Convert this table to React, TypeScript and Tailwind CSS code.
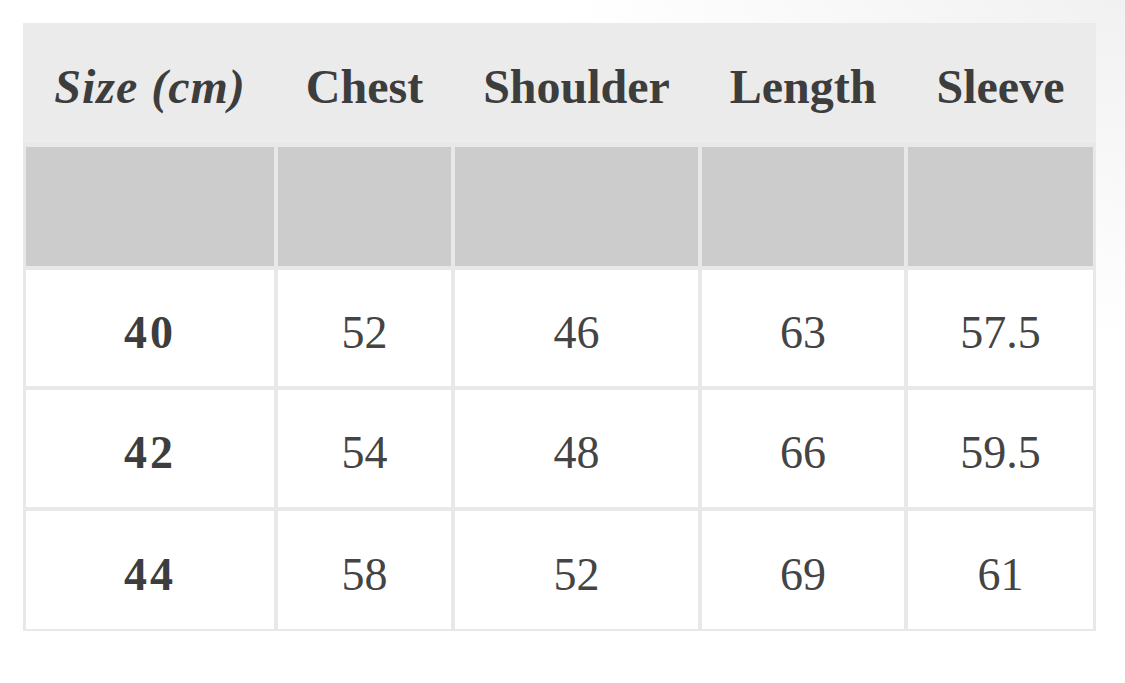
import React from 'react';

const headers = ['Size (cm)', 'Chest', 'Shoulder', 'Length', 'Sleeve'];

const rows = [
  ['40', '52', '46', '63', '57.5'],
  ['42', '54', '48', '66', '59.5'],
  ['44', '58', '52', '69', '61'],
];

const cols = 'grid grid-cols-[248px_173px_243px_202px_185px] gap-x-[4px]';

const App: React.FC = () => {
  return (
    <div className="w-[1125px] h-[683px] bg-[radial-gradient(ellipse_at_top_right,#f1f1f1_0%,#ffffff_35%)] pt-[23px] pl-[23px] font-['Liberation_Serif',serif] text-[#3d3d3d]">
      <div className="w-[1073px]">
        {/* header */}
        <div className={`${cols} h-[120px] bg-[#ebebeb] px-[3px] pt-[8px] items-center`}>
          {headers.map((h, i) => (
            <div
              key={h}
              className={`text-center text-[48px] font-bold leading-none ${i === 0 ? 'italic tracking-[1px]' : ''}`}
            >
              {h}
            </div>
          ))}
        </div>

        {/* body */}
        <div className={`${cols} gap-y-[4px] bg-[#e8e8e8] p-[3px] pt-[4px] pb-[2px]`}>
          {headers.map((h) => (
            <div key={`g-${h}`} className="h-[119px] bg-[#cccccc]" />
          ))}
          {rows.map((row, r) =>
            row.map((v, c) => (
              <div
                key={`${r}-${c}`}
                className={`flex items-center justify-center bg-white pt-[9px] text-[46px] leading-none ${
                  r === 0 ? 'h-[116px]' : r === 1 ? 'h-[117px]' : 'h-[118px]'
                } ${c === 0 ? 'font-bold tracking-[3px]' : 'text-[#444444]'}`}
              >
                {v}
              </div>
            ))
          )}
        </div>
      </div>
    </div>
  );
};

export default App;
